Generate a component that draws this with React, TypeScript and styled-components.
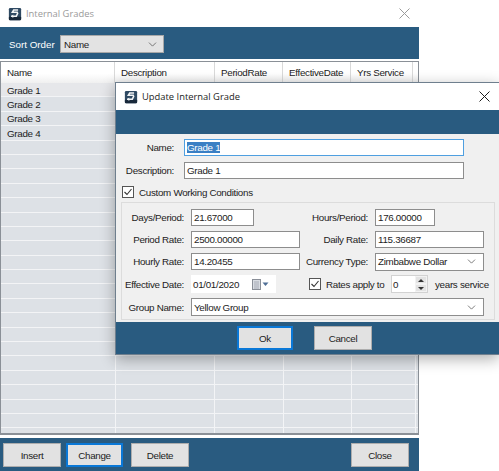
import React from "react";
import styled, { createGlobalStyle } from "styled-components";
import { ChevronDown } from "lucide-react";

const blue = "#295b80";

const GlobalStyle = createGlobalStyle`
  html, body {
    margin: 0;
    padding: 0;
    background: #ffffff;
    overflow: hidden;
  }
  body {
    font-family: "Liberation Sans", Arial, sans-serif;
    font-size: 9.8px;
    letter-spacing: -0.3px;
    color: #1c1c1c;
  }
`;

const Page = styled.div`
  position: relative;
  width: 499px;
  height: 471px;
  overflow: hidden;
`;

const ParentWindow = styled.div`
  width: 419px;
  height: 471px;
  display: flex;
  flex-direction: column;
`;

const TitleBar = styled.div<{ $muted?: boolean }>`
  height: 27px;
  flex: none;
  display: flex;
  align-items: center;
  gap: 4px;
  padding: 0 9px 0 8px;
  background: #ffffff;
  font-family: "Open Sans", "Liberation Sans", sans-serif;
  font-size: 9.4px;
  letter-spacing: 0;
  color: ${({ $muted }) => ($muted ? "#9a9a9a" : "#1c1c1c")};
`;

const TitleText = styled.span`
  flex: 1;
`;

const CloseGlyph = styled.svg`
  width: 11px;
  height: 11px;
  flex: none;
`;

const SortBar = styled.div`
  height: 32px;
  flex: none;
  display: flex;
  align-items: center;
  padding: 2px 9px 0 9px;
  box-sizing: border-box;
  background: ${blue};
  color: #ffffff;
`;

const SortLabel = styled.span`
  width: 51px;
  flex: none;
  letter-spacing: 0;
`;

const SortSelect = styled.div`
  width: 104px;
  height: 18px;
  box-sizing: border-box;
  display: flex;
  align-items: center;
  justify-content: space-between;
  padding: 0 4px 0 3px;
  background: #e3e3e3;
  border: 1px solid #a8a8a8;
  color: #1c1c1c;
`;

const Grid = styled.div`
  height: 374px;
  flex: none;
  box-sizing: border-box;
  margin-top: 2px;
  border: 1px solid #8a9097;
  border-bottom-width: 2px;
  background: #e9ebee;
  overflow: hidden;
`;

const GridRow = styled.div<{ $header?: boolean; $first?: boolean }>`
  display: grid;
  grid-template-columns: ${({ $header }) =>
    $header ? "114px 100px 68px 68px 62px 1fr" : "115px 99px 69px 68px 64px 1fr"};
  height: ${({ $header }) => ($header ? "21px" : "14.4px")};
  box-sizing: border-box;
  background: ${({ $header, $first }) =>
    $header ? "linear-gradient(#ffffff 55%, #f0f0f0)" : $first ? "#e6e7ea" : "#dde1e6"};
  border-bottom: ${({ $header }) => ($header ? "0" : "1px solid #f3f4f6")};
`;

const GridCell = styled.div<{ $header?: boolean }>`
  display: flex;
  align-items: center;
  padding-left: 6px;
  padding-top: ${({ $header }) => ($header ? "0" : "1px")};
  border-right: 1px solid ${({ $header }) => ($header ? "#d9d9d9" : "#f3f4f6")};
  white-space: nowrap;
  overflow: hidden;
`;

const ButtonBar = styled.div`
  flex: 1;
  display: flex;
  align-items: center;
  gap: 5px;
  margin-top: 3px;
  padding: 1px 10px 0 3px;
  background: ${blue};
`;

const ActionButton = styled.button<{ $focused?: boolean; $width?: number; $push?: number }>`
  width: ${({ $width }) => $width ?? 58}px;
  height: 24px;
  box-sizing: border-box;
  margin-left: ${({ $push }) => $push ?? 0}px;
  padding: 0;
  background: #e2e2e2;
  border: ${({ $focused }) =>
    $focused ? "2px solid #0a78d7" : "1px solid #adadad"};
  font: inherit;
  letter-spacing: inherit;
  color: #1c1c1c;
`;

const BarSpacer = styled.div`
  flex: 1;
`;

const Dialog = styled.div`
  position: absolute;
  left: 115px;
  top: 82px;
  width: 384px;
  height: 273px;
  box-sizing: border-box;
  display: flex;
  flex-direction: column;
  border: 1px solid #6f7f8e;
  border-right: 0;
  background: #f0f0f0;
  box-shadow: 0 4px 14px rgba(0, 0, 0, 0.32);
`;

const DialogBand = styled.div`
  height: 24px;
  flex: none;
  background: ${blue};
`;

const DialogBody = styled.div`
  flex: 1;
  display: flex;
  flex-direction: column;
  padding: 5px 4px 2px 5px;
`;

const NameRow = styled.div`
  display: flex;
  align-items: center;
  height: 17px;
  margin-bottom: 6px;
`;

const Label = styled.span<{ $width: number; $gap?: number }>`
  width: ${({ $width }) => $width}px;
  flex: none;
  text-align: right;
  white-space: nowrap;
  margin-right: ${({ $gap }) => $gap ?? 7}px;
`;

const TextInput = styled.div<{ $width: number; $focused?: boolean }>`
  width: ${({ $width }) => $width}px;
  height: 17px;
  flex: none;
  box-sizing: border-box;
  display: flex;
  align-items: center;
  padding-left: 2px;
  background: #ffffff;
  border: 1px solid ${({ $focused }) => ($focused ? "#4f9fe0" : "#8d8d8d")};
  white-space: nowrap;
`;

const Selected = styled.span`
  background: #3a7fc4;
  color: #ffffff;
`;

const CheckRow = styled.label`
  display: flex;
  align-items: center;
  gap: 5px;
  height: 12px;
  margin: 1px 0 4px 1px;
`;

const CheckBox = styled.span`
  width: 12px;
  height: 12px;
  flex: none;
  box-sizing: border-box;
  display: flex;
  align-items: center;
  justify-content: center;
  background: #ffffff;
  border: 1px solid #555555;
`;

const GroupBox = styled.div`
  flex: 1;
  display: flex;
  flex-direction: column;
  gap: 5px;
  padding-top: 6px;
  box-sizing: border-box;
  border: 1px solid #dcdcdc;
`;

const FormRow = styled.div<{ $tall?: boolean }>`
  display: flex;
  align-items: center;
  height: ${({ $tall }) => ($tall ? "18px" : "17px")};
`;

const HalfLeft = styled.div`
  width: 183px;
  flex: none;
  display: flex;
  align-items: center;
`;

const SelectBox = styled(TextInput)`
  justify-content: space-between;
  padding-right: 5px;
  height: 18px;
`;

const DateBox = styled.div`
  width: 85px;
  height: 18px;
  flex: none;
  box-sizing: border-box;
  display: flex;
  align-items: center;
  justify-content: space-between;
  padding: 0 6px 0 2px;
  background: #ffffff;
`;

const RatesCheck = styled.div`
  display: flex;
  align-items: center;
  gap: 5px;
  width: 82px;
  margin-left: 4px;
  white-space: nowrap;
`;

const Spinner = styled.div`
  width: 37px;
  height: 18px;
  flex: none;
  box-sizing: border-box;
  display: flex;
  align-items: center;
  justify-content: space-between;
  padding-left: 1px;
  background: #ffffff;
  border: 1px solid #d2d2d2;
`;

const SpinButtons = styled.div`
  width: 12px;
  height: 100%;
  display: flex;
  flex-direction: column;
  background: #e3e3e3;
`;

const SpinButton = styled.div`
  flex: 1;
  display: flex;
  align-items: center;
  justify-content: center;
  border: 1px solid #f2f2f2;
`;

const SpinArrow = styled.span<{ $down?: boolean }>`
  width: 0;
  height: 0;
  border-left: 3px solid transparent;
  border-right: 3px solid transparent;
  ${({ $down }) =>
    $down ? "border-top: 3px solid #333333;" : "border-bottom: 3px solid #333333;"}
`;

const Suffix = styled.span`
  margin-left: 7px;
  white-space: nowrap;
`;

const DialogFooter = styled.div`
  height: 32px;
  flex: none;
  display: flex;
  align-items: center;
  gap: 21px;
  padding-left: 121px;
  background: ${blue};
`;

const AppIcon = () => (
  <svg width="14" height="14" viewBox="0 0 16 16" style={{ flex: "none" }}>
    <rect x="1" y="1" width="14" height="14" rx="1.5" fill="#2f4a63" />
    <rect x="1" y="11" width="14" height="4" rx="1" fill="#18283a" />
    <path
      d="M11.5 3.5H6.5L5 6H10.5L11 7.5L9.5 10.5H3.5"
      fill="none"
      stroke="#f2f4f6"
      strokeWidth="1.8"
    />
    <path d="M6 8.5L3.5 10.5L6 12.5Z" fill="#f2f4f6" />
  </svg>
);

const CloseIcon = ({ color }: { color: string }) => (
  <CloseGlyph viewBox="0 0 11 11">
    <path d="M.5.5L10.5 10.5M10.5.5L.5 10.5" stroke={color} strokeWidth="1" />
  </CloseGlyph>
);

const Check = () => (
  <svg width="10" height="10" viewBox="0 0 10 10">
    <path d="M1.5 5L4 7.5L8.5 2" fill="none" stroke="#333333" strokeWidth="1.1" />
  </svg>
);

const Chevron = () => <ChevronDown size={13} color="#555555" strokeWidth={1.4} />;

const CalendarIcon = () => (
  <svg width="18" height="11" viewBox="0 0 18 11">
    <rect x=".5" y=".5" width="8" height="10" fill="#d9dde3" stroke="#8a8f98" />
    <path d="M2 3h5M2 5h5M2 7h5M2 9h5" stroke="#9aa0aa" strokeWidth=".8" />
    <path d="M10.5 3.5h6L13.5 7Z" fill="#4f6f96" />
  </svg>
);

const columns = ["Name", "Description", "PeriodRate", "EffectiveDate", "Yrs Service", ""];
const grades = ["Grade 1", "Grade 2", "Grade 3", "Grade 4"];
const emptyRows = Array.from({ length: 21 }, () => "");

export default function App() {
  return (
    <Page>
      <GlobalStyle />
      <ParentWindow>
        <TitleBar $muted>
          <AppIcon />
          <TitleText>Internal Grades</TitleText>
          <CloseIcon color="#9a9a9a" />
        </TitleBar>
        <SortBar>
          <SortLabel>Sort Order</SortLabel>
          <SortSelect>
            Name
            <Chevron />
          </SortSelect>
        </SortBar>
        <Grid>
          <GridRow $header>
            {columns.map((c, i) => (
              <GridCell $header key={i}>
                {c}
              </GridCell>
            ))}
          </GridRow>
          {[...grades, ...emptyRows].map((g, i) => (
            <GridRow key={i} $first={i === 0}>
              <GridCell>{g}</GridCell>
              {columns.slice(1).map((_, j) => (
                <GridCell key={j} />
              ))}
            </GridRow>
          ))}
        </Grid>
        <ButtonBar>
          <ActionButton>Insert</ActionButton>
          <ActionButton $focused $width={57}>
            Change
          </ActionButton>
          <ActionButton $push={3}>Delete</ActionButton>
          <BarSpacer />
          <ActionButton>Close</ActionButton>
        </ButtonBar>
      </ParentWindow>

      <Dialog>
        <TitleBar>
          <AppIcon />
          <TitleText>Update Internal Grade</TitleText>
          <CloseIcon color="#1c1c1c" />
        </TitleBar>
        <DialogBand />
        <DialogBody>
          <NameRow>
            <Label $width={53} $gap={10}>
              Name:
            </Label>
            <TextInput $width={280} $focused>
              <Selected>Grade 1</Selected>
            </TextInput>
          </NameRow>
          <NameRow>
            <Label $width={53} $gap={10}>
              Description:
            </Label>
            <TextInput $width={280}>Grade 1</TextInput>
          </NameRow>
          <CheckRow>
            <CheckBox>
              <Check />
            </CheckBox>
            Custom Working Conditions
          </CheckRow>
          <GroupBox>
            <FormRow>
              <HalfLeft>
                <Label $width={62}>Days/Period:</Label>
                <TextInput $width={63}>21.67000</TextInput>
              </HalfLeft>
              <Label $width={63}>Hours/Period:</Label>
              <TextInput $width={60}>176.00000</TextInput>
            </FormRow>
            <FormRow>
              <HalfLeft>
                <Label $width={62}>Period Rate:</Label>
                <TextInput $width={109}>2500.00000</TextInput>
              </HalfLeft>
              <Label $width={63}>Daily Rate:</Label>
              <TextInput $width={109}>115.36687</TextInput>
            </FormRow>
            <FormRow>
              <HalfLeft>
                <Label $width={62}>Hourly Rate:</Label>
                <TextInput $width={109}>14.20455</TextInput>
              </HalfLeft>
              <Label $width={63}>Currency Type:</Label>
              <SelectBox $width={109}>
                Zimbabwe Dollar
                <Chevron />
              </SelectBox>
            </FormRow>
            <FormRow $tall>
              <HalfLeft>
                <Label $width={62}>Effective Date:</Label>
                <DateBox>
                  01/01/2020
                  <CalendarIcon />
                </DateBox>
              </HalfLeft>
              <RatesCheck>
                <CheckBox>
                  <Check />
                </CheckBox>
                Rates apply to
              </RatesCheck>
              <Spinner>
                0
                <SpinButtons>
                  <SpinButton>
                    <SpinArrow />
                  </SpinButton>
                  <SpinButton>
                    <SpinArrow $down />
                  </SpinButton>
                </SpinButtons>
              </Spinner>
              <Suffix>years service</Suffix>
            </FormRow>
            <FormRow $tall>
              <Label $width={62}>Group Name:</Label>
              <SelectBox $width={293}>
                Yellow Group
                <Chevron />
              </SelectBox>
            </FormRow>
          </GroupBox>
        </DialogBody>
        <DialogFooter>
          <ActionButton $focused $width={56}>
            Ok
          </ActionButton>
          <ActionButton>Cancel</ActionButton>
        </DialogFooter>
      </Dialog>
    </Page>
  );
}
